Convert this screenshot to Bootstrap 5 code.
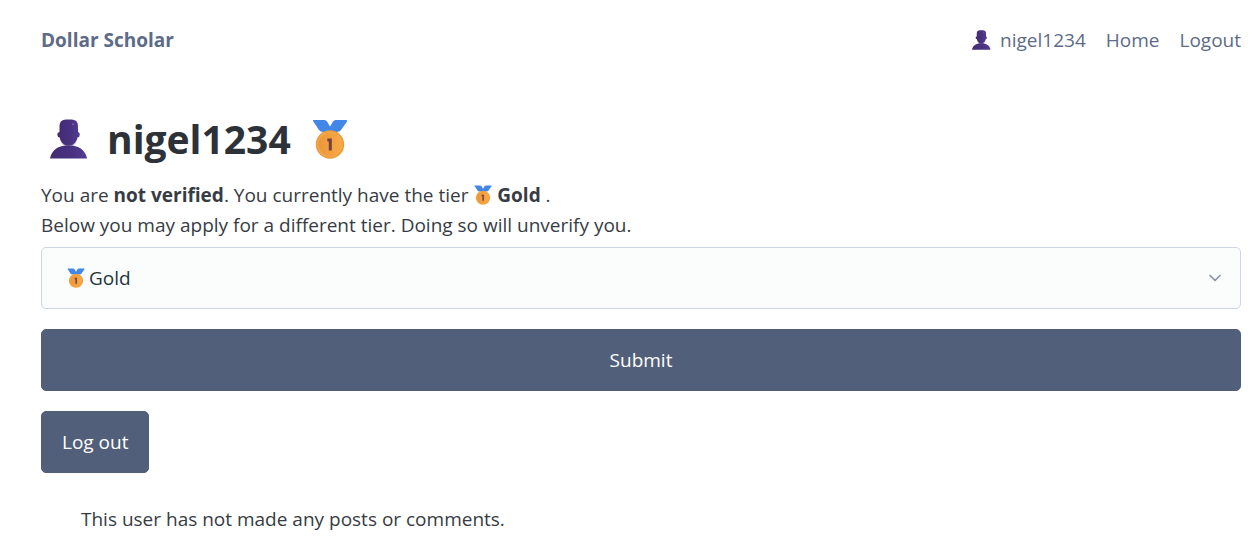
<!DOCTYPE html>
<html lang="en">
<head>
<meta charset="utf-8">
<meta name="viewport" content="width=device-width, initial-scale=1">
<title>nigel1234 - Dollar Scholar</title>
<link href="https://cdn.jsdelivr.net/npm/bootstrap@5.3.0/dist/css/bootstrap.min.css" rel="stylesheet">
<style>
  body { font-family: "Segoe UI", "Open Sans", "Noto Sans", sans-serif; font-size: 19px; line-height: 30px; color: #373c44; background: #fff; }
  .page { padding: 0 17px 0 41px; }
  .site-nav { height: 80px; padding: 0; }
  .site-nav a { color: #5d6b89; text-decoration: none; }
  .site-nav a:hover { color: #415462; }
  .site-nav .brand { font-weight: 700; }
  .site-links { gap: 20px; }
  .user-link { gap: 9px; }
  .ico { display: inline-block; width: 20px; height: 20px; flex: none; }
  .ico-lg { width: 40px; height: 40px; }
  .ico-text { vertical-align: -3px; }
  .profile-title { font-size: 39px; line-height: 50px; font-weight: 700; color: #2d3138; gap: 19px; margin: 34px 0 16px; padding-left: 7px; }
  .tier-label { margin-bottom: 7px; }
  .tier-field { margin-bottom: 20px; }
  .tier-select { height: 62px; padding: 15px 47px; font-size: 19px; line-height: 30px; color: #24333e; border: 1px solid #cfd5e2; border-radius: 5px; background-color: #fbfcfc;
    background-image: url("data:image/svg+xml,%3Csvg xmlns='http://www.w3.org/2000/svg' viewBox='0 0 24 24' fill='none' stroke='%238891a4' stroke-width='2' stroke-linecap='round' stroke-linejoin='round'%3E%3Cpath d='M6 9l6 6 6-6'/%3E%3C/svg%3E"); background-size: 20px 20px; background-position: right 15px center; }
  .select-icon { left: 25px; top: 21px; pointer-events: none; }
  .btn-slate { --bs-btn-color: #fff; --bs-btn-bg: #525f7a; --bs-btn-border-color: #525f7a; --bs-btn-hover-color: #fff; --bs-btn-hover-bg: #48536b; --bs-btn-hover-border-color: #48536b; --bs-btn-font-size: 19px; --bs-btn-line-height: 30px; --bs-btn-padding-x: 20px; --bs-btn-padding-y: 15px; --bs-btn-border-radius: 5px; margin-bottom: 20px; }
  .activity { padding: 11px 40px 0; margin: 0; }
</style>
</head>
<body>
<svg width="0" height="0" class="position-absolute" aria-hidden="true">
  <defs>
    <linearGradient id="skin" x1="0" x2="1" y1="0" y2="0"><stop offset="0" stop-color="#432a72"/><stop offset=".6" stop-color="#4a3283"/><stop offset="1" stop-color="#533c93"/></linearGradient>
    <linearGradient id="coin" x1="0" x2="1" y1="0" y2="0"><stop offset="0" stop-color="#e9973c"/><stop offset=".5" stop-color="#f2a03f"/><stop offset="1" stop-color="#f8a947"/></linearGradient>
    <symbol id="person" viewBox="0 0 40 40">
      <path d="M2 39.500C3.500 31 10 26.500 20.500 26.500S37.500 31 39 39.500Z" fill="url(#skin)"/>
      <path d="M11.500 7Q11.500 0.500 18 0.500H23.500Q30 0.500 30 7V13Q31.800 13 31.800 15.500T29.500 18.500C28.500 23 25.500 26.800 20.700 26.800S12.500 23 11.700 18.500Q9.300 18 9.300 15.500T11.500 13Z" fill="url(#skin)"/>
      <path d="M12 20Q15 26 20.700 26.500T29 20Q27 29 20.700 29T12 20Z" fill="#3f286f" opacity=".3"/>
      <path d="M24 5.200h2" stroke="#8374ae" stroke-width="1"/>
    </symbol>
    <symbol id="medal" viewBox="0 0 40 40">
      <path d="M3 2Q2.500 1 4 1H14.500Q16 1 17 2.500L20 7.500 23 2.500Q24 1 25.500 1H36Q37.500 1 37 2.500L31 11Q29.500 13 27 13H13Q10.500 13 9 11Z" fill="#4287e8"/>
      <circle cx="20" cy="25.500" r="14.200" fill="#eb9a3c"/>
      <circle cx="20" cy="25.500" r="12.700" fill="#f6a947"/>
      <circle cx="20" cy="25.500" r="11.500" fill="url(#coin)"/>
      <path d="M17.300 19.500H21.800V31.500H18.800V22.500H17.300Z" fill="#743f41"/>
    </symbol>
  </defs>
</svg>
<div class="page container-fluid">
  <nav class="site-nav navbar justify-content-between">
    <a class="brand" href="#">Dollar Scholar</a>
    <div class="site-links d-flex">
      <a href="#" class="user-link d-flex align-items-center"><svg class="ico" aria-hidden="true"><use href="#person"/></svg>nigel1234</a>
      <a href="#">Home</a>
      <a href="#">Logout</a>
    </div>
  </nav>
  <main>
    <h1 class="profile-title d-flex align-items-center">
      <svg class="ico ico-lg" aria-hidden="true"><use href="#person"/></svg>
      <span>nigel1234</span>
      <svg class="ico ico-lg" role="img" aria-label="Gold tier"><use href="#medal"/></svg>
    </h1>
    <form>
      <label class="tier-label d-block" for="tier">You are <b>not verified</b>. You currently have the tier <svg class="ico ico-text me-1" aria-hidden="true"><use href="#medal"/></svg><b>Gold</b> .<br>Below you may apply for a different tier. Doing so will unverify you.</label>
      <div class="tier-field position-relative">
        <select id="tier" class="tier-select form-select"><option>Gold</option><option>Silver</option><option>Bronze</option></select>
        <svg class="select-icon ico position-absolute" aria-hidden="true"><use href="#medal"/></svg>
      </div>
      <button type="submit" class="btn btn-slate d-block w-100">Submit</button>
    </form>
    <button type="button" class="btn btn-slate">Log out</button>
    <p class="activity">This user has not made any posts or comments.</p>
  </main>
</div>
<script src="https://cdn.jsdelivr.net/npm/bootstrap@5.3.0/dist/js/bootstrap.bundle.min.js"></script>
</body>
</html>
